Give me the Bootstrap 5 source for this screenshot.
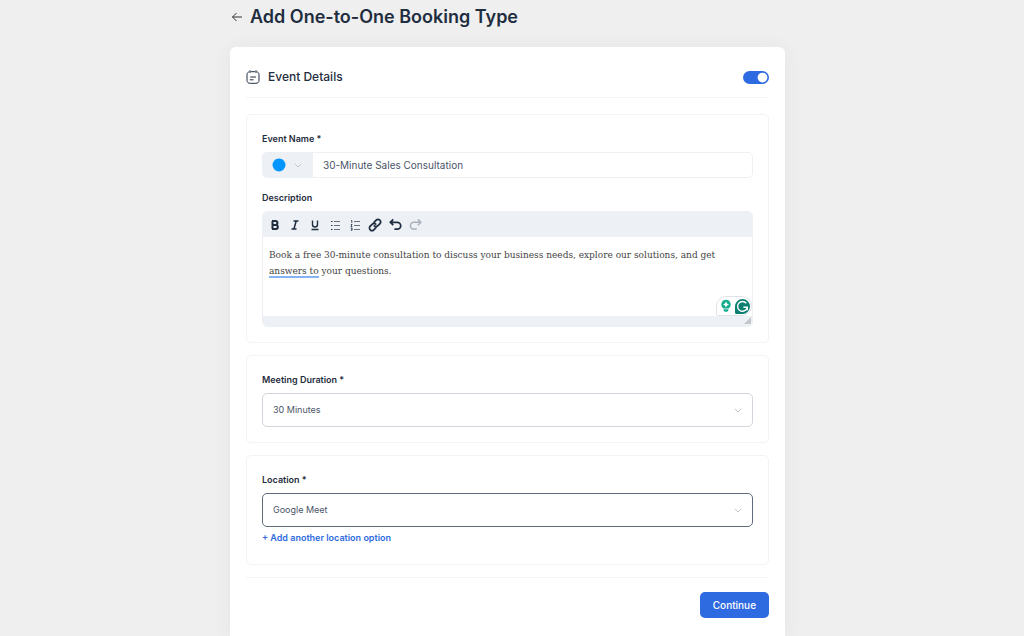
<!DOCTYPE html>
<html lang="en">
<head>
<meta charset="utf-8">
<meta name="viewport" content="width=device-width, initial-scale=1">
<title>Add One-to-One Booking Type</title>
<link rel="stylesheet" href="https://cdn.jsdelivr.net/npm/bootstrap@5.3.0/dist/css/bootstrap.min.css">
<style>
  :root { --ink: #1f2d40; --ink-soft: #4a5568; --soft: #edf1f5; --line: #f1f3f5; --blue: #2f6be0; }
  body { background: #efefef; color: var(--ink); font-family: Inter, "Liberation Sans", sans-serif; font-size: 10px; line-height: 16px; }
  .page { padding-right: 9px; }
  .page-column { width: 100%; max-width: 555px; }
  .page-head { height: 47px; padding: 3px 0 0 1px; gap: 7px; }
  .page-title { font-size: 18px; line-height: 28px; font-weight: 600; }
  .back-link { width: 12px; line-height: 26px; color: #333; }
  .sheet { padding: 16px; border-radius: 6px 6px 0 0; box-shadow: 0 2px 20px rgba(60, 70, 90, .06); }
  .sheet-head { height: 35px; border-bottom: 1px solid var(--line); padding-bottom: 6px; margin-bottom: 16px; }
  .sheet-title { font-size: 12px; line-height: 20px; font-weight: 500; }
  .form-switch .form-check-input.toggle { width: 26px; height: 13px; border: 0; margin: 0; }
  .form-switch .toggle:checked { background-color: var(--blue); }
  .panel { border: 1px solid var(--line); border-radius: 5px; padding: 15px; margin-bottom: 12px; }
  .field-label { display: block; font-size: 9px; line-height: 18px; font-weight: 600; margin-bottom: 4px; }
  .name-group { height: 26px; margin-bottom: 11px; }
  .color-pick { width: 51px; background: var(--soft); border: 0; border-radius: 5px 0 0 5px; padding: 0 0 0 10px; gap: 8px; }
  .name-group .form-control { font-size: 10px; line-height: 16px; padding: 0 10px; border: 1px solid var(--soft); border-left: 0; border-radius: 0 5px 5px 0; color: var(--ink-soft); }
  .editor { border: 1px solid var(--soft); border-radius: 5px; }
  .editor-tools { height: 25px; background: var(--soft); padding: 0 5px; gap: 6px; }
  .tool { width: 14px; height: 14px; padding: 0; border: 0; background: none; color: var(--ink); display: flex; align-items: center; justify-content: center; }
  .tool:disabled { color: #a9b0b9; }
  .editor-body { height: 79px; padding: 10px 6px; font: 10px/16px "DejaVu Serif Condensed", "DejaVu Serif", serif; color: #444; }
  .hint { border-bottom: 2px solid #86b3f7; }
  .editor-foot { height: 10px; background: var(--soft); }
  .helper { right: 0; bottom: 0; width: 36px; height: 20px; padding: 0 1px 0 4px; border: 1px solid #dfe3e8; border-radius: 10px 10px 10px 2px; background: #fff; }
  .choice { height: 34px; font-size: 9px; line-height: 16px; padding: 0 30px 0 10px; border: 1px solid #d2d6dc; border-radius: 5px; color: var(--ink-soft);
    background: #fff url("data:image/svg+xml,%3Csvg xmlns='http://www.w3.org/2000/svg' viewBox='0 0 8 5'%3E%3Cpath d='M.8.8 4 4 7.2.8' fill='none' stroke='%23c3c7cc'/%3E%3C/svg%3E") no-repeat right 10px center / 8px 5px; }
  .choice.current { border-color: #5f6c7e; }
  .add-link { font-size: 9px; line-height: 22px; font-weight: 600; color: var(--blue); }
  .sheet-foot { border-top: 1px solid var(--line); padding-top: 14px; }
  .btn-go { height: 26px; padding: 0 13px; border: 0; border-radius: 5px; background: var(--blue); color: #fff; font-size: 10px; line-height: 16px; font-weight: 500; }
</style>
</head>
<body>
<main class="page min-vh-100 d-flex flex-column align-items-center">
  <div class="page-column flex-grow-1 d-flex flex-column">
    <header class="page-head d-flex align-items-start">
      <a class="back-link" href="#" aria-label="Back"><svg width="12" height="10" viewBox="0 0 12 10" fill="none" stroke="currentColor"><path d="M5.500 1 1.500 5l4 4M1.500 5H11"/></svg></a>
      <h1 class="page-title m-0">Add One-to-One Booking Type</h1>
    </header>
    <form class="sheet bg-white flex-grow-1">
      <div class="sheet-head d-flex align-items-center justify-content-between">
        <div class="d-flex align-items-center gap-2">
          <svg width="14" height="14" viewBox="0 0 14 14" fill="none" stroke="#1f2d40" stroke-linecap="round"><path d="M5.200 1.700h3.600M2.800 1.900C1.600 2.300 1 3.200 1 4.600v5.600C1 12.300 2.200 13.300 4.200 13.300h5.600c2 0 3.200-1 3.200-3.100V4.600c0-1.400-.6-2.300-1.800-2.700M4 .6v2M10 .6v2M4.600 7h5M4.200 9.800h3"/></svg>
          <h2 class="sheet-title m-0">Event Details</h2>
        </div>
        <div class="form-switch p-0 d-flex"><input class="form-check-input toggle" type="checkbox" role="switch" aria-label="Enable event" checked></div>
      </div>
      <section class="panel">
        <label class="field-label" for="event-name">Event Name *</label>
        <div class="name-group d-flex">
          <button class="color-pick flex-shrink-0 d-flex align-items-center" type="button" aria-label="Event color">
            <svg width="14" height="14" viewBox="0 0 14 14"><circle cx="7" cy="7" r="6.500" fill="#0396ff"/></svg>
            <svg width="8" height="5" viewBox="0 0 8 5" fill="none" stroke="#c3c7cc"><path d="M.8.8 4 4 7.200.8"/></svg>
          </button>
          <input class="form-control" id="event-name" value="30-Minute Sales Consultation">
        </div>
        <div class="field-label" id="description-label">Description</div>
        <div class="editor overflow-hidden">
          <div class="editor-tools d-flex align-items-center" role="toolbar" aria-label="Formatting">
            <button class="tool" type="button" aria-label="Bold"><svg width="12" height="12" viewBox="0 0 12 12" fill="none" stroke="currentColor" stroke-width="2"><path d="M3.500 2v8M3 2h3.500a1.900 1.900 0 0 1 0 3.900H3.500h3.300a2 2 0 0 1 0 4.100H3"/></svg></button>
            <button class="tool" type="button" aria-label="Italic"><svg width="12" height="12" viewBox="0 0 12 12" fill="none" stroke="currentColor" stroke-width="1.500"><path d="M4.500 2h5M2.500 10h5M7.200 2 4.900 10"/></svg></button>
            <button class="tool" type="button" aria-label="Underline"><svg width="12" height="12" viewBox="0 0 12 12" fill="none" stroke="currentColor" stroke-width="1.400"><path d="M3.500 1.500v4a2.500 2.500 0 0 0 5 0v-4M2.500 10.500h7"/></svg></button>
            <button class="tool" type="button" aria-label="Bulleted list"><svg width="12" height="12" viewBox="0 0 12 12" stroke="currentColor" stroke-width="1.200"><path d="M2 2.500h1.500M2 6.500h1.500M2 10.500h1.500"/><path opacity=".65" d="M5 2.500h6M5 6.500h6M5 10.500h6"/></svg></button>
            <button class="tool" type="button" aria-label="Numbered list"><svg width="12" height="12" viewBox="0 0 12 12" fill="none" stroke="currentColor"><path stroke-width=".8" d="M2 1.500h.8V4M1.800 5.500h1.300L1.900 7.500h1.400M1.800 9h1.300v2.200H1.800M2 10.100h1"/><path opacity=".65" stroke-width="1.200" d="M5 2.500h6M5 6.500h6M5 10.500h6"/></svg></button>
            <button class="tool" type="button" aria-label="Link"><svg width="14" height="14" viewBox="0 0 12 12" fill="none" stroke="currentColor" stroke-width="1.500" stroke-linecap="round"><path d="M5.200 3.700 7 1.900a2.100 2.100 0 0 1 3.100 3.100L8.300 6.800a2 2 0 0 1-2.900 0M6.800 8.300 5 10.100A2.100 2.100 0 0 1 1.900 7l1.800-1.800a2 2 0 0 1 2.900 0"/></svg></button>
            <button class="tool" type="button" aria-label="Undo"><svg width="14" height="14" viewBox="0 0 12 12" fill="none" stroke="currentColor" stroke-width="1.500"><path d="M4.500 1.200 2 3.700l2.500 2.500M2 3.700h6a2.900 2.900 0 0 1 0 5.800H5.500"/></svg></button>
            <button class="tool" type="button" aria-label="Redo" disabled><svg width="14" height="14" viewBox="0 0 12 12" fill="none" stroke="currentColor" stroke-width="1.300"><path d="M8.500 1.200 11 3.700 8.500 6.200M11 3.700H5a2.900 2.900 0 0 0 0 5.800h2.500"/></svg></button>
          </div>
          <div class="editor-body position-relative" role="textbox" aria-multiline="true" aria-labelledby="description-label">Book a free 30-minute consultation to discuss your business needs, explore our solutions, and get <span class="hint">answers to</span> your questions.
            <div class="helper position-absolute d-flex align-items-center justify-content-between">
              <svg width="10" height="14" viewBox="0 0 10 14"><path d="M5 .8a4.700 4.700 0 0 0-2.600 8.600h5.200A4.700 4.700 0 0 0 5 .8zM2.600 10.300h4.800v1.200L6.200 12.800H3.800L2.600 11.500z" fill="#13ac8c"/><path d="M5 2.600 6 4.600l2 1-2 1-1 2-1-2-2-1 2-1z" fill="#fff"/></svg>
              <svg width="15" height="15" viewBox="0 0 15 15"><path d="M7.500 0A7.500 7.500 0 1 1 7.500 15H1.500Q0 15 0 13.500v-6A7.500 7.500 0 0 1 7.500 0z" fill="#0b8070"/><path d="M11.300 4.300a4.900 4.900 0 1 0 1 4H8.400M12.300 8.300v2.900" fill="none" stroke="#fff" stroke-width="1.400"/></svg>
            </div>
          </div>
          <div class="editor-foot d-flex justify-content-end align-items-center"><svg width="8" height="8" viewBox="0 0 8 8"><path d="M7 0v7H0z" fill="#c3c7cc"/></svg></div>
        </div>
      </section>
      <section class="panel">
        <label class="field-label" for="duration">Meeting Duration *</label>
        <select class="form-select choice" id="duration"><option>30 Minutes</option></select>
      </section>
      <section class="panel">
        <label class="field-label" for="location">Location *</label>
        <select class="form-select choice current" id="location"><option>Google Meet</option></select>
        <a class="add-link d-block text-decoration-none" href="#">+ Add another location option</a>
      </section>
      <div class="sheet-foot d-flex justify-content-end"><button class="btn btn-go" type="button">Continue</button></div>
    </form>
  </div>
</main>
<script src="https://cdn.jsdelivr.net/npm/bootstrap@5.3.0/dist/js/bootstrap.bundle.min.js"></script>
</body>
</html>
